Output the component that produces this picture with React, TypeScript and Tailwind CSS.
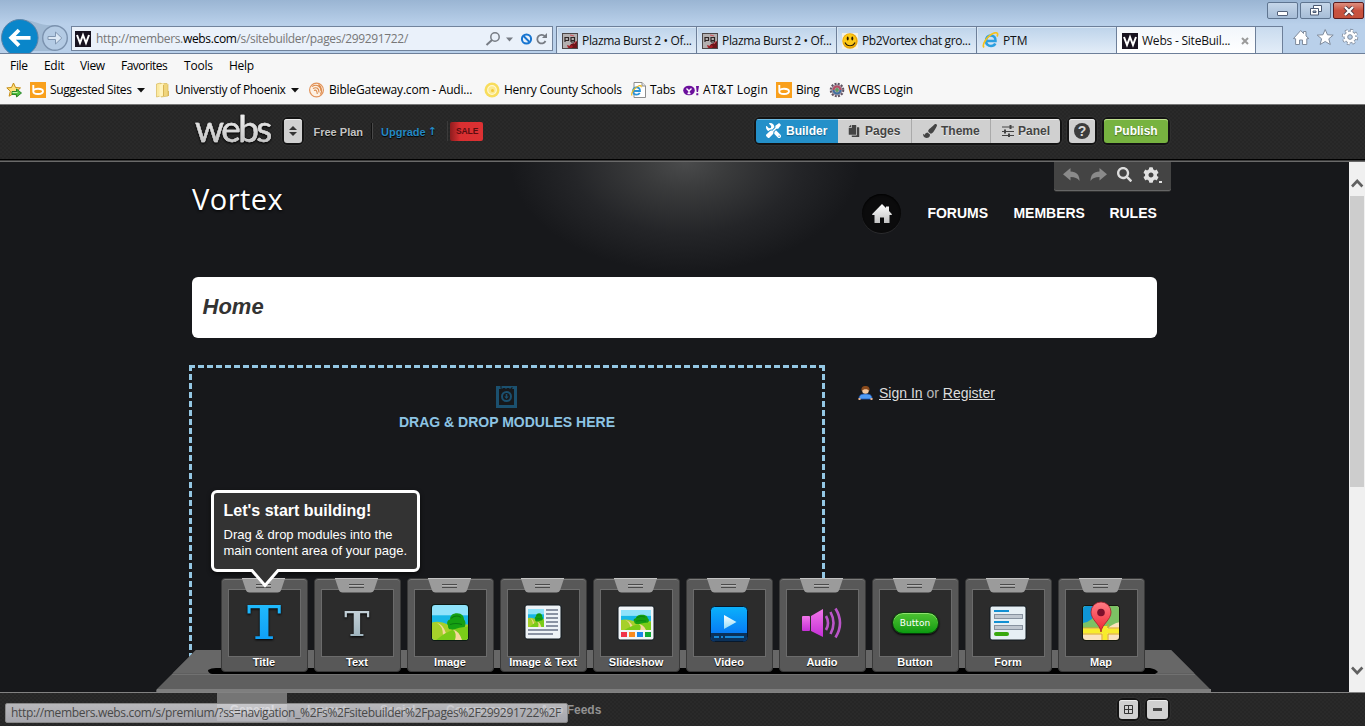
import React from "react";
import { FaTools, FaPaintBrush, FaCopy, FaSearch, FaCog } from "react-icons/fa";

const ui = "font-['Open_Sans','Noto_Sans',sans-serif] whitespace-nowrap";
const arial = "font-['Liberation_Sans',Arial,sans-serif] whitespace-nowrap";

/* ---------- small pictures ---------- */

function WebsFavicon() {
  return (
    <svg width="16" height="16" viewBox="0 0 16 16" className="shrink-0">
      <rect width="16" height="16" fill="#17121f" />
      <path d="M2 4l3 8 3-8 3 8 3-8" fill="none" stroke="#fff" strokeWidth="2" />
    </svg>
  );
}

function PlazmaIcon() {
  return (
    <svg width="16" height="16" viewBox="0 0 16 16" className="shrink-0">
      <rect x=".5" y=".5" width="15" height="15" fill="#b3afaf" stroke="#4c4747" />
      <path d="M3 9V4.500h3.500v3H3M9 9V4.500h3.500v3H9m3.500 0V9H9" fill="none" stroke="#2d2525" strokeWidth="1.200" />
      <path d="M6 15l3-4 3-1 3-2v7z" fill="#6d1419" />
      <path d="M9 12l2 1-1 2H7zM5 12l3 1-2 2z" fill="#a81c24" />
      <path d="M8 2l4 1M12 11l2-3" stroke="#cf5560" />
    </svg>
  );
}

function SmileyIcon() {
  return (
    <svg width="16" height="16" viewBox="0 0 16 16" className="shrink-0">
      <rect width="16" height="16" fill="#f4f1e4" />
      <circle cx="8" cy="8" r="7.700" fill="#e9a506" />
      <circle cx="7.600" cy="7.500" r="6.500" fill="#fdc916" />
      <ellipse cx="5.700" cy="5.500" rx="1" ry="1.900" fill="#2b1c04" />
      <ellipse cx="10.300" cy="5.500" rx="1" ry="1.900" fill="#2b1c04" />
      <path d="M3 9.500c2 4.300 8 4.300 10 0" fill="none" stroke="#2b1c04" strokeWidth="1.200" />
    </svg>
  );
}

function IeIcon() {
  return (
    <svg width="17" height="17" viewBox="0 0 17 17" className="shrink-0">
      <path d="M4 9h9.500c.3-3.500-2-5.500-4.700-5.500S4 5.600 4 9c0 3 2 5 5 5 2 0 3.500-.8 4.300-2.500" fill="none" stroke="#2b9fe0" strokeWidth="2.600" />
      <path d="M2 15.500C-.5 13 5 4 11.500 1.300 14.500 0 16.800 1 15 4.500" fill="none" stroke="#f5c21b" strokeWidth="1.700" />
    </svg>
  );
}

function BingIcon() {
  return (
    <svg width="16" height="16" viewBox="0 0 16 16" className="shrink-0">
      <rect width="16" height="16" fill="#f9a01c" />
      <path d="M3.300 3v6.500c0 2 2 2.500 4.700 2.500s5-.7 5-2.700-2-2.600-5-2.600c-2 0-3.500.5-4.500 1.300" fill="none" stroke="#fff" strokeWidth="1.900" />
    </svg>
  );
}

function AddFavIcon() {
  return (
    <svg width="17" height="16" viewBox="0 0 17 16" className="shrink-0">
      <path d="M7.500 1l2 4.500 5 .4-3.800 3.300 1.200 5-4.400-2.700-4.400 2.700 1.200-5L.8 5.900l4.700-.4z" fill="#ffe07a" stroke="#c58d16" />
      <path d="M6 9.500h4.500V7l5 4-5 4v-2.500H6z" fill="#4fc03f" stroke="#1f7f22" strokeWidth=".9" />
      <path d="M6.500 10.500h5" stroke="#c9f2b0" />
    </svg>
  );
}

function FolderIcon() {
  return (
    <svg width="15" height="16" viewBox="0 0 15 16" className="shrink-0">
      <path d="M1.500 2l4-1v13l-4 1z" fill="#fbe9a0" stroke="#d9b95a" strokeWidth=".7" />
      <path d="M6 1.500h6l1 1v11.500l-7 1z" fill="#f0d57c" stroke="#d6b85a" strokeWidth=".7" />
      <path d="M4.500 2.500l4-1.500v12.500l-4 1.500z" fill="#fff3bd" />
      <path d="M8.500 3v11M13.500 9v5" stroke="#cfa842" strokeWidth=".8" />
    </svg>
  );
}

function BibleIcon() {
  return (
    <svg width="17" height="16" viewBox="0 0 17 16" className="shrink-0">
      <circle cx="8.500" cy="8" r="6.900" fill="#fdf1e4" stroke="#e2935a" strokeWidth="1.200" />
      <path d="M4 4.500c5-3 9 0 9 4.500M5 6.500c4-2 6 0 6 4M6 8.500c2-1 3 0 3.300 3.500M12.500 12.500c2-4 1-8-2-10" fill="none" stroke="#dc8a4b" strokeWidth="1.100" />
    </svg>
  );
}

function SunIcon() {
  return (
    <svg width="16" height="16" viewBox="0 0 16 16" className="shrink-0">
      <circle cx="8" cy="8" r="7.500" fill="#f8dd5c" />
      <circle cx="8" cy="8" r="4.300" fill="#fbe98f" stroke="#fff8d4" strokeWidth="1.200" />
      <circle cx="8.500" cy="8.500" r="1.500" fill="#f3c93a" />
    </svg>
  );
}

function TabsPageIcon() {
  return (
    <svg width="15" height="16" viewBox="0 0 15 16" className="shrink-0">
      <path d="M3 .5h8l3.500 3.500v11.500H3z" fill="#fff" stroke="#8d8d8d" />
      <path d="M11 .5V4h3.500" fill="#e6e6e6" stroke="#8d8d8d" />
      <path d="M2 9h7c0-2.500-1.500-3.700-3.500-3.700S2 6.700 2 9s1.500 3.600 3.500 3.600c1.600 0 2.700-.6 3.200-1.700" fill="none" stroke="#2a93d8" strokeWidth="1.800" />
      <path d="M1 13.500C-.5 11 4 5 8 3.700c2-.5 2.500.3 2 1.500" fill="none" stroke="#f0bb1d" strokeWidth="1.200" />
    </svg>
  );
}

function YahooIcon() {
  return (
    <svg width="17" height="16" viewBox="0 0 17 16" className="shrink-0">
      <ellipse cx="6" cy="8.500" rx="5.800" ry="4.800" fill="#6b0f9c" />
      <path d="M3.500 6.500L6 9l2.500-2.500M6 9v2.500M4.500 11.500h3" stroke="#fff" strokeWidth="1.400" fill="none" />
      <path d="M13 4h3l-1 6h-1.300zM13.300 11.300h2v2h-2z" fill="#6b0f9c" />
    </svg>
  );
}

function WcbsIcon() {
  return (
    <svg width="16" height="16" viewBox="0 0 16 16" className="shrink-0">
      <circle cx="8" cy="8" r="5.800" fill="#a79aaa" />
      <circle cx="8" cy="8" r="6.300" fill="none" stroke="#5f5260" strokeWidth="2" strokeDasharray="2 1.300" />
      <path d="M4.500 8a3.500 3.500 0 0 1 7 0" fill="none" stroke="#b94d63" strokeWidth="2" />
      <path d="M4.500 8a3.500 3.500 0 0 0 7 0" fill="none" stroke="#3f6fa0" strokeWidth="2" />
      <path d="M8 5.500l2 2.500-2 2.500L6 8z" fill="#5da25f" />
    </svg>
  );
}

function Landscape({ x, y, w, h }: { x: number; y: number; w: number; h: number }) {
  return (
    <svg x={x} y={y} width={w} height={h} viewBox="0 0 36 34" preserveAspectRatio="none">
      <rect width="36" height="34" fill="#8fe3fb" />
      <rect y="10" width="36" height="11" fill="#17b7e6" />
      <path d="M0 17q8-2 16 2 10-1 20 0v15H0z" fill="#a6d02a" />
      <path d="M5 17.500q6 1 9 10l-3 2q0-9-6-12z" fill="#f6d79a" />
      <path d="M16 20c-2-3 0-6 2-6 0-4 3-6 7-6 5 0 7 3 7 6 3 3 1 9-2 10h-9c-4 0-5-1-5-4z" fill="#16a012" />
      <path d="M19 13q5-4 10-1M18 19q6-2 12 0" stroke="#0a7a10" fill="none" />
      <path d="M4 34q14-12 32-13v13z" fill="#7acb18" />
      <path d="M21 24q6 1 9 10h-7q2-7-2-10z" fill="#f6d79a" />
    </svg>
  );
}

/* ---------- browser chrome ---------- */

const tabs = [
  { icon: <PlazmaIcon />, text: "Plazma Burst 2 • Of...", cls: "tracking-[-0.34px]" },
  { icon: <PlazmaIcon />, text: "Plazma Burst 2 • Of...", cls: "tracking-[-0.34px]" },
  { icon: <SmileyIcon />, text: "Pb2Vortex chat gro...", cls: "tracking-[-0.38px]" },
  { icon: <IeIcon />, text: "PTM", cls: "-ml-px tracking-[-0.1px]" },
];

function WindowButtons() {
  const base = "flex h-[17px] w-[31px] items-center justify-center rounded-[2px] border";
  return (
    <div className="flex h-[26px] items-start justify-end gap-[2px] pr-px pt-[2px]">
      <div className={`${base} border-[#5f7590] bg-linear-to-b from-[#c5d6e9] to-[#a6bdd7]`}>
        <div className="mt-[5px] h-[5px] w-[11px] rounded-[1px] border border-[#54627a] bg-white" />
      </div>
      <div className={`${base} border-[#5f7590] bg-linear-to-b from-[#c5d6e9] to-[#a6bdd7]`}>
        <svg width="12" height="11" viewBox="0 0 12 11">
          <path d="M3.500.5h8v6h-8z" fill="#fff" stroke="#4c5a72" />
          <path d="M.5 3.500h8v6.500h-8z" fill="#fff" stroke="#4c5a72" />
          <path d="M3 6h3v1.500H3z" fill="#b0c3da" stroke="#4c5a72" />
        </svg>
      </div>
      <div className={`${base} border-[#5b1b1d] bg-linear-to-b from-[#dd8f80] via-[#c9513f] to-[#c4513c]`}>
        <svg width="12" height="10" viewBox="0 0 12 10">
          <path d="M2 1l8 8M10 1L2 9" stroke="#4c3742" strokeWidth="4" />
          <path d="M2 1l8 8M10 1L2 9" stroke="#fff" strokeWidth="2.300" />
        </svg>
      </div>
    </div>
  );
}

function AddressRow() {
  return (
    <div className="flex h-[28px] border-b border-[#6d7f99]">
      <div className="relative w-[71px] shrink-0">
        <svg width="71" height="34" viewBox="0 0 71 34" className="absolute left-0 top-[-7px]">
          <path d="M24 0.500C37 2 39 7 55 6v26H24z" fill="#a1bad4" />
          <circle cx="19.800" cy="18.800" r="18.300" fill="#0a86ca" stroke="#5f84a8" strokeWidth="1" />
          <path d="M30.500 18.800H11M19 11l-7.800 7.800L19 26.600" fill="none" stroke="#fff" strokeWidth="3.800" />
          <circle cx="55" cy="19" r="12.300" fill="#b4cbe4" stroke="#7b92ae" strokeWidth="1.400" />
          <path d="M48 17.500h7.500V13l6.300 6-6.300 6v-4.500H48z" fill="#dce8f5" stroke="#8096b1" />
        </svg>
      </div>
      <div className="flex h-[25px] w-[482px] shrink-0 items-center border border-[#71839c] bg-[#eaf1fa] pl-[3px] pr-[4px]">
        <WebsFavicon />
        <span className={`${ui} ml-[5px] mt-px text-[12px] leading-[16px] tracking-[-0.34px] text-[#777]`}>
          http://members.<span className="text-black">webs.com</span>/s/sitebuilder/pages/299291722/
        </span>
        <svg width="64" height="18" viewBox="0 0 64 18" className="ml-auto">
          <circle cx="11" cy="7" r="4.200" fill="none" stroke="#777c84" strokeWidth="1.500" />
          <path d="M8 10l-5.500 5" stroke="#777c84" strokeWidth="2" />
          <path d="M22 7.500h7l-3.500 4z" fill="#777c84" />
          <circle cx="42.500" cy="9" r="4.600" fill="none" stroke="#1775d1" strokeWidth="2" />
          <path d="M39.500 6l6 6" stroke="#1775d1" strokeWidth="2" />
          <path d="M61 6.500A4.300 4.300 0 1 0 61.500 11" fill="none" stroke="#777c84" strokeWidth="1.800" />
          <path d="M63 3v5h-5z" fill="#777c84" />
        </svg>
      </div>
      <div className="ml-[3px] flex shrink-0">
        {tabs.map((t, i) => (
          <div key={i} className="flex w-[140px] items-center overflow-hidden border-l border-t border-[#6d7f99] bg-linear-to-b from-[#bdd3ea] to-[#e3edf8] pl-[5px] pt-px shadow-[inset_1px_1px_0_#d9e7f5]">
            {t.icon}
            <span className={`${ui} ml-[4px] mt-px text-[12px] text-[#111] ${t.cls}`}>{t.text}</span>
          </div>
        ))}
        <div className="flex w-[139px] items-center border-l border-t border-[#6d7f99] bg-linear-to-b from-[#f2f6fb] to-white pl-[5px] pt-px">
          <WebsFavicon />
          <span className={`${ui} ml-[4px] mt-px text-[12px] tracking-[-0.22px] text-[#111]`}>Webs - SiteBuil...</span>
          <svg width="8" height="8" viewBox="0 0 8 8" className="ml-auto mr-[6px]">
            <path d="M1 1l6 6M7 1L1 7" stroke="#9a9a9a" strokeWidth="2" />
          </svg>
        </div>
        <div className="w-[28px] border-x border-t border-[#6d7f99] bg-linear-to-b from-[#c9dbee] to-[#e3edf8]" />
      </div>
      <svg width="75" height="22" viewBox="0 0 75 22" className="ml-[7px] shrink-0">
        <path d="M3.500 12.500L10.700 4.500l2.800 3V5.500h2.500v4.500l2.800 2.500-2 .3v5.700h-4.300v-4.500h-3v4.500H5.600v-5.700z" fill="#fff" stroke="#7f8b9c" />
        <path d="M35.200 3.500l2.300 5.300 5.700.3-4.400 3.700 1.500 5.700-5.100-3-5.100 3 1.500-5.700-4.400-3.700 5.700-.3z" fill="#fff" stroke="#7f8b9c" />
        <circle cx="60" cy="11" r="6" fill="#fff" stroke="#7f8b9c" />
        <circle cx="60" cy="11" r="6.600" fill="none" stroke="#7f8b9c" strokeWidth="3.200" strokeDasharray="2.800 2.380" />
        <circle cx="60" cy="11" r="5.900" fill="none" stroke="#fff" strokeWidth="3" strokeDasharray="2 2.630" />
        <circle cx="60" cy="11" r="4.700" fill="#fff" />
        <circle cx="60" cy="11" r="2.300" fill="#b7cfe9" stroke="#7f8b9c" />
      </svg>
    </div>
  );
}

function MenuBar() {
  return (
    <div className={`${ui} flex h-[24px] items-center bg-[#f7f7f7] pl-[10px] text-[12px] text-black`}>
      <span className="w-[34px] tracking-[-0.3px]">File</span>
      <span className="w-[36px] tracking-[-0.3px]">Edit</span>
      <span className="w-[41px] tracking-[-0.4px]">View</span>
      <span className="w-[63px] tracking-[-0.5px]">Favorites</span>
      <span className="w-[45px] tracking-[-0.2px]">Tools</span>
      <span className="tracking-[-0.3px]">Help</span>
    </div>
  );
}

const Arrow = () => (
  <svg width="8" height="5" viewBox="0 0 8 5" className="ml-[5px]">
    <path d="M0 0h8L4 4.500z" fill="#111" />
  </svg>
);

const favs = [
  { w: "w-[125px]", icon: <BingIcon />, text: "Suggested Sites", cls: "ml-[4px] tracking-[-0.38px]", arrow: true },
  { w: "w-[153px]", icon: <FolderIcon />, text: "Universtiy of Phoenix", cls: "ml-[5px] tracking-[-0.38px]", arrow: true },
  { w: "w-[176px]", icon: <BibleIcon />, text: "BibleGateway.com - Audi...", cls: "ml-[4px] tracking-[-0.2px]" },
  { w: "w-[147px]", icon: <SunIcon />, text: "Henry County Schools", cls: "ml-[4px] tracking-[-0.25px]" },
  { w: "w-[52px]", icon: <TabsPageIcon />, text: "Tabs", cls: "ml-[4px] tracking-[-0.3px]" },
  { w: "w-[93px]", icon: <YahooIcon />, text: "AT&T Login", cls: "ml-[3px] tracking-[0.2px]" },
  { w: "w-[53px]", icon: <BingIcon />, text: "Bing", cls: "ml-[4px] tracking-[-0.3px]" },
  { w: "w-[100px]", icon: <WcbsIcon />, text: "WCBS Login", cls: "ml-[3px] tracking-[-0.15px]" },
];

function FavoritesBar() {
  return (
    <div className={`${ui} flex h-[27px] items-center border-b border-[#777] bg-[#f7f7f7] pb-[2px] pl-[6px] text-[12px] text-black`}>
      <div className="w-[24px]"><AddFavIcon /></div>
      {favs.map((f) => (
        <div key={f.text} className={`flex shrink-0 items-center ${f.w}`}>
          {f.icon}
          <span className={f.cls}>{f.text}</span>
          {f.arrow && <Arrow />}
        </div>
      ))}
    </div>
  );
}

/* ---------- site builder ---------- */

const noise =
  "bg-[#272727] bg-[repeating-conic-gradient(#2a2a2a_0%_25%,#262626_0%_50%)] bg-[length:4px_4px]";
const well = "rounded-[6px] bg-[#141414] p-[2px] shadow-[0_0_0_1px_#303030]";
const btn = "flex items-center justify-center bg-[#d0d0d0] shadow-[inset_0_1px_0_#ececec]";

function BuilderBar() {
  return (
    <header className={`${arial} ${noise} flex h-[55px] items-center border-b border-black pb-[2px] pl-[195px] font-bold`}>
      <span className="mt-[-6px] w-[77px] bg-linear-to-b from-white to-[#b9b9b9] bg-clip-text font-['Lato',sans-serif] text-[37px] font-normal leading-[44px] tracking-[-2.600px] text-transparent drop-shadow-[0_1px_1px_#000] [-webkit-text-stroke:0.4px_#ddd]">
        webs
      </span>
      <div className={`${well} ml-[10px]`}>
        <div className={`${btn} h-[24px] w-[18px] rounded-[3px]`}>
          <svg width="8" height="12" viewBox="0 0 8 12">
            <path d="M4 1l4 4H0zM4 11L0 7h8z" fill="#333" />
          </svg>
        </div>
      </div>
      <span className="ml-[9.500px] pt-[2px] text-[11px] text-[#c4c4c4] [text-shadow:0_1px_1px_#000]">Free Plan</span>
      <div className="ml-[9px] h-[16px] w-px bg-[#484848] shadow-[-1px_0_0_#111]" />
      <span className="ml-[8px] flex items-center pt-[2px] text-[11px] text-[#2589c4] [text-shadow:0_1px_1px_#000]">
        Upgrade
        <span className="ml-[2px] w-[8px] font-['DejaVu_Sans',sans-serif] text-[11px] leading-[12px]">↑</span>
      </span>
      <div className="ml-[11px] h-[20px] w-px bg-[#3b3b3b]" />
      <div className="ml-[2px] flex h-[19px] w-[33px] items-center justify-center rounded-[2px] bg-linear-to-r from-[#8f1c1e] via-[#d92f31] via-30% to-[#dc3133] pl-[2px] text-[8.500px] tracking-[-0.1px] text-[#5a0d10]">
        SALE
      </div>
      <div className="ml-auto mr-[195px] flex items-center">
        <div className={well}>
          <div className="flex overflow-hidden rounded-[3px] text-[12px] text-[#444] [text-shadow:0_1px_0_#eee]">
            <div className="flex h-[24px] w-[82px] items-center bg-[#2490c9] pb-px pl-[10px] text-white shadow-[inset_0_1px_0_#6bb9e2] [text-shadow:0_1px_1px_#145e87]">
              <FaTools className="mr-[5px] size-[15px] -scale-x-100" />Builder
            </div>
            <div className="flex w-[73px] items-center bg-[#d0d0d0] pb-px pl-[10px] shadow-[inset_0_1px_0_#ececec]">
              <FaCopy className="mr-[5px] size-[12px] -scale-x-100" />Pages
            </div>
            <div className="flex w-[79px] items-center border-l border-[#aaa] bg-[#d0d0d0] pb-px pl-[11px] shadow-[inset_0_1px_0_#ececec]">
              <FaPaintBrush className="mr-[4px] size-[14px]" />Theme
            </div>
            <div className="flex w-[70px] items-center border-l border-[#aaa] bg-[#d0d0d0] pb-px pl-[11px] shadow-[inset_0_1px_0_#ececec]">
              <svg width="12" height="12" viewBox="0 0 12 12" className="mr-[4px]">
                <path d="M0 2h12M0 6.500h12M0 10.500h12" stroke="#444" strokeWidth="1.200" />
                <path d="M8.500 0v4M3 4.500v4M7 8.500v3.500" stroke="#444" strokeWidth="2" />
              </svg>
              Panel
            </div>
          </div>
        </div>
        <div className={`${well} ml-[5px]`}>
          <div className={`${btn} h-[24px] w-[26px] rounded-[3px]`}>
            <div className="flex size-[16px] items-center justify-center rounded-full bg-[#3c3c3c] text-[14px] leading-none text-[#d8d8d8]">?</div>
          </div>
        </div>
        <div className={`${well} ml-[5px]`}>
          <div className="flex h-[24px] w-[64px] items-center justify-center rounded-[3px] bg-[#77b340] pb-px text-[12px] text-white shadow-[inset_0_1px_0_#bfe08f] [text-shadow:0_1px_1px_#446c20]">
            Publish
          </div>
        </div>
      </div>
    </header>
  );
}

function BackArrow({ flip = false }: { flip?: boolean }) {
  return (
    <svg width="17" height="14" viewBox="0 0 17 14" className={flip ? "mr-[10px] -scale-x-100" : "mr-[10px]"}>
      <path d="M7.500 0v3.500c6 0 9 3.500 9 9.500-2-3-4.500-4-9-4v3.500L0 6.300z" fill="#8a8a8a" />
    </svg>
  );
}

function EditTools() {
  return (
    <div className="absolute left-[1054px] top-[-1px] flex h-[31px] w-[117px] items-center rounded-b-[3px] border-b border-[#303030] bg-[#444] pb-[3px] pl-[9px] shadow-[inset_0_-1px_0_#666]">
      <BackArrow />
      <BackArrow flip />
      <FaSearch className="mr-[11px] size-[15px] text-[#ddd]" />
      <FaCog className="size-[16px] text-[#e2e2e2]" />
      <div className="mt-[14px] h-[2px] w-[3px] bg-[#e2e2e2]" />
    </div>
  );
}

function DropZone() {
  const side =
    "w-[3px] shrink-0 bg-[linear-gradient(to_bottom,#94c7e4_6px,transparent_6px)] bg-[length:3px_9px]";
  return (
    <div className="flex h-[327px] w-[636px]">
      <div className={side} />
      <div className="flex w-[630px] flex-col items-center bg-[linear-gradient(to_right,#94c7e4_6px,transparent_6px)] bg-[length:9px_3px] bg-[position:-3px_0] bg-repeat-x">
        <svg width="21" height="22" viewBox="0 0 21 22" className="mr-px mt-[21px]">
          <rect x="1.500" y="1.500" width="18" height="19" fill="none" stroke="#1b506f" strokeWidth="3" />
          <path d="M5 0v2.500h11V0" fill="none" stroke="#17181b" strokeDasharray="3 1" />
          <circle cx="10.500" cy="10.500" r="4.500" fill="none" stroke="#1b506f" strokeWidth="2" />
          <path d="M9.700 8h1.600v2.500h1.500L10.500 13 8.200 10.500h1.500z" fill="#1b506f" />
        </svg>
        <span className={`${arial} mt-[6px] text-[14px] font-bold leading-[16px] text-[#8dc4e4]`}>
          DRAG &amp; DROP MODULES HERE
        </span>
      </div>
      <div className={side} />
    </div>
  );
}

function SiteHeader() {
  return (
    <div className={`${arial} flex h-[115px] items-start pl-[192px] text-white`}>
      <h1 className="mt-[18px] w-[670px] font-['Open_Sans','Noto_Sans',sans-serif] text-[29px] leading-[37px] tracking-[0.45px] [text-shadow:0_1px_3px_#000]">
        Vortex
      </h1>
      <div className="mt-[32px] flex size-[39px] items-center justify-center rounded-full bg-[#0b0b0c] shadow-[inset_0_1px_2px_#000,0_1px_0_#2b2b2d]">
        <svg width="20" height="19" viewBox="0 0 20 19">
          <defs>
            <linearGradient id="homeFill" x1="0" y1="0" x2="0" y2="1">
              <stop offset="0" stopColor="#fff" />
              <stop offset="1" stopColor="#c2c2c2" />
            </linearGradient>
          </defs>
          <path d="M10 0l4 4V2.500h3V7l3 3.200-.5.800H17.500v8H12v-5.500H8V19H2.500v-8H.5L0 10.200z" fill="url(#homeFill)" />
        </svg>
      </div>
      <nav className="mt-[43px] flex pl-[26.400px] text-[14px] font-bold leading-[16px]">
        <span className="w-[86px]">FORUMS</span>
        <span className="w-[96px]">MEMBERS</span>
        <span>RULES</span>
      </nav>
    </div>
  );
}

function Scrollbar() {
  return (
    <div className="flex w-[16px] shrink-0 flex-col items-center bg-[#f0f0f0]">
      <svg width="16" height="34" viewBox="0 0 16 34" className="shrink-0">
        <path d="M3 24.500l5.200-5.500 5.200 5.500" fill="none" stroke="#606060" strokeWidth="2.600" />
      </svg>
      <div className="h-[291px] w-[14px] shrink-0 bg-[#cdcdcd]" />
      <div className="grow" />
      <svg width="16" height="34" viewBox="0 0 16 34" className="shrink-0">
        <path d="M3 9.500l5.200 5.500 5.200-5.500" fill="none" stroke="#606060" strokeWidth="2.600" />
      </svg>
    </div>
  );
}

function UserIcon() {
  return (
    <svg width="15" height="14" viewBox="0 0 15 14" className="mr-[6px]">
      <path d="M1 13c0-4 2-5 6.500-5S14 9 14 13z" fill="#4f9bf5" stroke="#2159b5" strokeWidth=".8" />
      <path d="M.5 12h2v2h-2zM12.500 12h2v2h-2z" fill="#eab38a" />
      <circle cx="7.500" cy="4.500" r="3.300" fill="#f2c8a0" />
      <path d="M3.500 5C3 1 5 0 7.500 0s4.500 1 4 5C10 3 6 2.500 3.500 5z" fill="#8a4a1c" />
    </svg>
  );
}

/* ---------- module shelf ---------- */

function ModuleArt({ name }: { name: string }) {
  switch (name) {
    case "Title":
      return (
        <span className="bg-linear-to-b from-[#26c3ff] to-[#0a95f2] bg-clip-text font-['DejaVu_Serif',serif] text-[46px] font-bold leading-[60px] text-transparent drop-shadow-[0_1px_1px_#000]">T</span>
      );
    case "Text":
      return (
        <span className="mt-[2px] bg-linear-to-b from-[#d3dde3] to-[#8fa7b2] bg-clip-text font-['DejaVu_Serif',serif] text-[34px] font-bold leading-[46px] text-transparent drop-shadow-[0_1px_1px_#000]">T</span>
      );
    case "Image":
      return (
        <svg width="38" height="38" viewBox="0 0 38 38">
          <clipPath id="imgClip"><rect x="1" y="1" width="36" height="35" rx="3" /></clipPath>
          <rect width="38" height="37" rx="4" fill="#0b1a14" />
          <g clipPath="url(#imgClip)"><Landscape x={1} y={1} w={36} h={35} /></g>
        </svg>
      );
    case "Image & Text":
      return (
        <svg width="38" height="38" viewBox="0 0 38 38">
          <rect x="1" y="1" width="36" height="34" rx="2" fill="#eef3f7" stroke="#10181e" />
          <Landscape x={4} y={5} w={16} h={18} />
          <path d="M22 6h12M22 10h12M22 14h12M22 18h12M22 22h12M4 26h30M4 30h25" stroke="#8a93a3" strokeWidth="2" />
        </svg>
      );
    case "Slideshow":
      return (
        <svg width="38" height="38" viewBox="0 0 38 38">
          <rect x="1" y="2" width="36" height="34" rx="2" fill="#f1f5f8" stroke="#10181e" />
          <Landscape x={4} y={6} w={30} h={20} />
          <rect x="4" y="28" width="6" height="5" fill="#f23349" />
          <rect x="12" y="28" width="6" height="5" fill="#f98a1f" />
          <rect x="20" y="28" width="6" height="5" fill="#1a86ea" />
          <rect x="28" y="28" width="6" height="5" fill="#0faa35" />
        </svg>
      );
    case "Video":
      return (
        <svg width="38" height="38" viewBox="0 0 38 38">
          <defs>
            <linearGradient id="vid" x1="0" y1="0" x2="0" y2="1">
              <stop offset="0" stopColor="#0bb2fb" />
              <stop offset="1" stopColor="#066bf3" />
            </linearGradient>
            <linearGradient id="play" x1="0" y1="0" x2="0" y2="1">
              <stop offset="0" stopColor="#fff" />
              <stop offset="1" stopColor="#8fdcf8" />
            </linearGradient>
          </defs>
          <rect x=".5" y="2.500" width="37" height="35" rx="4" fill="url(#vid)" stroke="#07182c" />
          <path d="M1 29h36v4q0 4-4 4H5q-4 0-4-4z" fill="#0b3159" />
          <path d="M4 33h5M11 33h2M15 33h19" stroke="#1685d4" strokeWidth="2" />
          <path d="M14 11l12.500 7L14 25z" fill="url(#play)" />
        </svg>
      );
    case "Audio":
      return (
        <svg width="44" height="38" viewBox="0 0 44 38" className="ml-[2px]">
          <defs>
            <linearGradient id="aud" x1="0" y1="0" x2="0" y2="1">
              <stop offset="0" stopColor="#f277ea" />
              <stop offset="1" stopColor="#c52fd6" />
            </linearGradient>
          </defs>
          <rect x="1" y="12" width="8" height="15" rx="1" fill="url(#aud)" />
          <path d="M10 12L22 5v28l-12-6z" fill="url(#aud)" />
          <path d="M25 12q4 7 0 14M29.500 8q6 11 0 22M34.500 4.500q9 14.500 0 29" fill="none" stroke="#bb55c9" strokeWidth="2.600" />
        </svg>
      );
    case "Button":
      return (
        <div className="mt-px flex h-[22px] w-[47px] items-center justify-center rounded-full border border-[#083b0a] bg-linear-to-b from-[#4cc432] to-[#079a10] font-['DejaVu_Sans',sans-serif] text-[9px] leading-none tracking-[0.1px] text-white shadow-[inset_0_1px_0_#8fe06f,0_1px_2px_#000]">
          Button
        </div>
      );
    case "Form":
      return (
        <svg width="38" height="38" viewBox="0 0 38 38">
          <rect x="1" y="2" width="36" height="34" rx="2" fill="#e6eff4" stroke="#10181e" />
          <path d="M5 7h15M5 18h15" stroke="#118fd2" strokeWidth="2" />
          <rect x="5.500" y="10.500" width="28" height="4" fill="#bfc7d0" stroke="#87929f" />
          <rect x="5.500" y="21.500" width="28" height="4" fill="#bfc7d0" stroke="#87929f" />
          <rect x="5" y="28" width="15" height="4" rx="2" fill="#38a80e" />
        </svg>
      );
    default:
      return (
        <svg width="38" height="42" viewBox="0 0 38 42" className="mb-[3px]">
          <defs>
            <linearGradient id="pin" x1="0" y1="0" x2="0" y2="1">
              <stop offset="0" stopColor="#ff7d85" />
              <stop offset="1" stopColor="#ef2332" />
            </linearGradient>
            <clipPath id="mapClip"><rect x="1" y="6" width="36" height="34" rx="3" /></clipPath>
          </defs>
          <rect x="0" y="5" width="38" height="36" rx="4" fill="#15180f" />
          <g clipPath="url(#mapClip)">
            <rect x="0" y="5" width="38" height="36" fill="#fbe3be" />
            <path d="M0 28V5h38v17q-8 2-12 6z" fill="#7cc264" />
            <path d="M0 5h16l-6 14q-5 4-10 4z" fill="#0f96d6" />
            <path d="M0 31h38M23 41V26" stroke="#f8ec2c" strokeWidth="5" />
            <path d="M0 28h20V24M38 28H26v-4M0 34h20v6M38 34H26v6" fill="none" stroke="#dca81d" />
          </g>
          <path d="M19 32c-1-8-10-12-10-20a10 10 0 0 1 20 0c0 8-9 12-10 20z" fill="url(#pin)" stroke="#a5202b" strokeWidth=".8" />
          <circle cx="19" cy="12.500" r="3.800" fill="#7d0f2b" />
        </svg>
      );
  }
}

const modules = ["Title", "Text", "Image", "Image & Text", "Slideshow", "Video", "Audio", "Button", "Form", "Map"];

function ModuleCard({ name }: { name: string }) {
  return (
    <div className="relative flex h-[94px] w-[87px] flex-col items-center rounded-[4px] border border-[#393939] bg-[#585858] pt-[10px] shadow-[inset_0_1px_0_#7c7c7c]">
      <div className="flex h-[68px] w-[73px] items-center justify-center border border-[#6b6b6b] border-t-[#707070] bg-[#2c2c2c] pb-px pr-px">
        <ModuleArt name={name} />
      </div>
      <span className={`${arial} mt-[-1px] pr-px text-[11px] font-bold leading-[13px] text-white [text-shadow:0_1px_1px_#000]`}>{name}</span>
      <svg width="44" height="15" viewBox="0 0 44 15" className="absolute left-[20px] top-[-1px]">
        <path d="M0 .5h43l-3.500 10.500q-1 3.500-4 3.500h-28q-3 0-4-3.500z" fill="#9b9b9b" />
        <path d="M0 .5h43" stroke="#c3c3c3" />
        <path d="M14 6.500h15M14 9.500h15" stroke="#4a4a4a" />
        <path d="M14 7.500h15" stroke="#b5b5b5" />
      </svg>
    </div>
  );
}

function Shelf() {
  return (
    <div className="absolute left-[156px] top-[416px] h-[114px] w-[1055px]">
      <svg width="1055" height="42" viewBox="0 0 1055 42" className="absolute bottom-0 left-0">
        <path d="M40 0h975l40 40v2H0v-2z" fill="#5f5f5f" />
        <path d="M40 0h975l23 23H17z" fill="#676767" />
        <path d="M52 20q3-2 8-2h934q6 1 8 4l-3 2H56q-4-1-4-4z" fill="#000" />
        <path d="M16 24.500h1023" stroke="#717171" />
        <path d="M1 40.500h1054" stroke="#7e7e7e" strokeWidth="3" />
      </svg>
      <div className="relative flex gap-[6px] pl-[65px]">
        {modules.map((m) => <ModuleCard key={m} name={m} />)}
      </div>
    </div>
  );
}

function StartTip() {
  return (
    <div className={`${arial} absolute left-[211px] top-[328px] h-[82px] w-[209px] rounded-[6px] border-[3px] border-white bg-[#333] pl-[9.500px] text-white shadow-[0_2px_4px_rgba(0,0,0,.6)]`}>
      <div className="mt-[8px] text-[16px] font-bold leading-[19px]">Let's start building!</div>
      <div className="mt-[7px] text-[13px] leading-[16px]">Drag &amp; drop modules into the<br />main content area of your page.</div>
      <svg width="32" height="21" viewBox="0 0 32 21" className="absolute left-[35px] top-[76px]">
        <path d="M2 0l14 16L30 0z" fill="#333" />
        <path d="M1 1.500h2l13 15 13-15h2" fill="none" stroke="#fff" strokeWidth="3" />
      </svg>
    </div>
  );
}

function BottomBar() {
  const cell = "h-[28px] shrink-0 pt-[10px] leading-[14px]";
  return (
    <footer className={`${arial} ${noise} relative flex h-[34px] border-t border-[#828282] pl-[217px] text-[12px] font-bold text-[#929292]`}>
      <div className={`${cell} w-[70px] bg-[#757575] text-center text-[#eee]`}>General</div>
      <div className={`${cell} w-[80px] pl-[20px]`}>Layout</div>
      <div className={`${cell} w-[66px] pl-[13px]`}>Social</div>
      <div className={`${cell} w-[107px] pl-[13px]`}>Commerce</div>
      <div className={`${cell} w-[577px]`}>App Feeds</div>
      <div className={`${well} mt-[5px] h-[23px]`}>
        <div className={`${btn} h-[19px] w-[19px] rounded-[3px]`}>
          <svg width="9" height="9" viewBox="0 0 9 9">
            <path d="M.5.500h8v8h-8zM4.500 0v9M0 4.500h9" fill="none" stroke="#333" />
          </svg>
        </div>
      </div>
      <div className={`${well} ml-[5px] mt-[5px] h-[23px]`}>
        <div className={`${btn} h-[19px] w-[21px] rounded-[3px]`}>
          <div className="h-[3px] w-[9px] bg-[#444]" />
        </div>
      </div>
      <div className={`${ui} absolute left-[5px] top-[10px] flex h-[20px] w-[563px] items-center rounded-[2px] border border-[#888] bg-linear-to-b from-[#dcdce0]/80 to-[#bcbcc4]/85 pl-[5px] text-[12px] font-normal tracking-[-0.34px] text-[#484848]`}>
        http://members.webs.com/s/premium/?ss=navigation_%2Fs%2Fsitebuilder%2Fpages%2F299291722%2F
      </div>
    </footer>
  );
}

export default function App() {
  return (
    <div className="flex h-[726px] w-[1365px] flex-col overflow-hidden bg-[#17181b]">
      <div className="h-[54px] bg-linear-to-b from-[#9ab5d3] to-[#b9d0ea] to-45%">
        <WindowButtons />
        <AddressRow />
      </div>
      <MenuBar />
      <FavoritesBar />
      <BuilderBar />
      <div className="h-[2px] border-b border-[#6a6a6a] bg-[#3a3a3a]" />
      <div className="relative flex h-[530px] overflow-hidden">
        <main className="w-[1349px] bg-[#17181b] bg-[radial-gradient(ellipse_175px_110px_at_685px_0px,#4a4b4c_0%,#3a3b3c_25%,#242528_65%,transparent_100%)]">
          <SiteHeader />
          <div className="ml-[192px] flex h-[61px] w-[965px] items-center rounded-[6px] bg-white pb-[2px] pl-[10.500px]">
            <span className={`${arial} text-[22px] font-bold italic leading-[26px] text-[#333]`}>Home</span>
          </div>
          <div className="mt-[27px] flex pl-[189px]">
            <DropZone />
            <div className={`${arial} ml-[33px] mt-[20px] flex h-[16px] items-center text-[14px] text-[#b8b8b8]`}>
              <UserIcon />
              <span><span className="text-[#ddd] underline">Sign In</span> or <span className="text-[#ddd] underline">Register</span></span>
            </div>
          </div>
        </main>
        <Scrollbar />
        <EditTools />
        <Shelf />
        <StartTip />
      </div>
      <BottomBar />
    </div>
  );
}
